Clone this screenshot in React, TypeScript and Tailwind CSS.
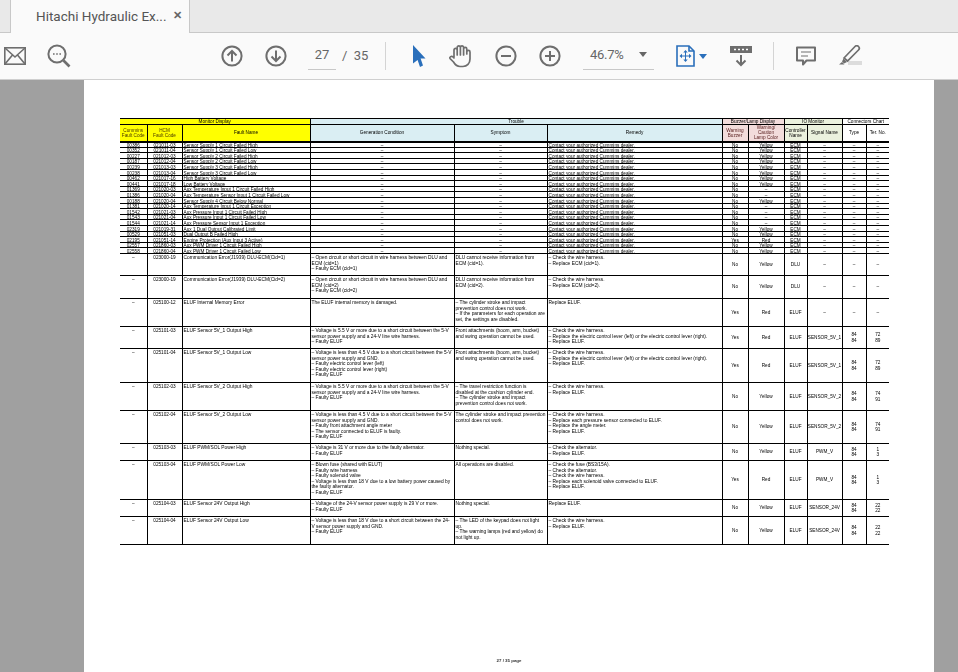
import { ReactNode } from 'react';

type Row = { hcm: string; name: string; cond?: ReactNode; sym?: ReactNode; rem?: ReactNode; buz: string; lamp: string; ctl: string; sig?: string; type?: boolean; ter?: string[]; h: string };

const short: [string, string, string, string, string][] = [
  ['00386', '021011-03', 'Sensor Supply 1 Circuit Failed High', 'No', 'Yellow'],
  ['00352', '021011-04', 'Sensor Supply 1 Circuit Failed Low', 'No', 'Yellow'],
  ['00227', '021012-03', 'Sensor Supply 2 Circuit Failed High', 'No', 'Yellow'],
  ['00187', '021012-04', 'Sensor Supply 2 Circuit Failed Low', 'No', 'Yellow'],
  ['00239', '021013-03', 'Sensor Supply 3 Circuit Failed High', 'No', 'Yellow'],
  ['00238', '021013-04', 'Sensor Supply 3 Circuit Failed Low', 'No', 'Yellow'],
  ['00462', '021017-16', 'High Battery Voltage', 'No', 'Yellow'],
  ['00441', '021017-18', 'Low Battery Voltage', 'No', 'Yellow'],
  ['01369', '021020-03', 'Aux Temperature Input 1 Circuit Failed High', 'No', '–'],
  ['01386', '021020-04', 'Aux Temperature Sensor Input 1 Circuit Failed Low', 'No', '–'],
  ['00188', '021020-04', 'Sensor Supply 4 Circuit Below Normal', 'No', 'Yellow'],
  ['01381', '021020-14', 'Aux Temperature Input 1 Circuit Exception', 'No', '–'],
  ['01542', '021021-03', 'Aux Pressure Input 1 Circuit Failed High', 'No', '–'],
  ['01543', '021021-04', 'Aux Pressure Input 1 Circuit Failed Low', 'No', '–'],
  ['01544', '021021-14', 'Aux Pressure Sensor Input 1 Exception', 'No', '–'],
  ['02319', '021019-31', 'Aux 1 Dual Output Calibrated Limit', 'No', 'Yellow'],
  ['00529', '021051-03', 'Dual Output B Failed High', 'No', 'Yellow'],
  ['02195', '021051-14', 'Engine Protection (Aux Input 3 Active)', 'Yes', 'Red'],
  ['02557', '021860-03', 'Aux PWM Driver 1 Circuit Failed High', 'No', 'Yellow'],
  ['02558', '021860-04', 'Aux PWM Driver 1 Circuit Failed Low', 'No', 'Yellow'],
];

const lines = (...t: string[]) => t.map((l, i) => <div key={i}>{l}</div>);

const rows: Row[] = [
  { hcm: '023000-19', name: 'Communication Error(J1939) DLU-ECM(Cid=1)', h: 'h-[22px]', buz: 'No', lamp: 'Yellow', ctl: 'DLU',
    cond: lines('– Open circuit or short circuit in wire harness between DLU and ECM (cid=1)', '– Faulty ECM (cid=1)'), sym: 'DLU cannot receive information from ECM (cid=1).', rem: lines('– Check the wire harness.', '– Replace ECM (cid=1).') },
  { hcm: '023000-19', name: 'Communication Error(J1939) DLU-ECM(Cid=2)', h: 'h-[23px]', buz: 'No', lamp: 'Yellow', ctl: 'DLU',
    cond: lines('– Open circuit or short circuit in wire harness between DLU and ECM (cid=2)', '– Faulty ECM (cid=2)'), sym: 'DLU cannot receive information from ECM (cid=2).', rem: lines('– Check the wire harness.', '– Replace ECM (cid=2).') },
  { hcm: '025100-12', name: 'ELUF Internal Memory Error', h: 'h-[28px]', buz: 'Yes', lamp: 'Red', ctl: 'ELUF',
    cond: 'The ELUF internal memory is damaged.', sym: lines('– The cylinder stroke and impact prevention control does not work.', '– If the parameters for each operation are set, the settings are disabled.'), rem: 'Replace ELUF.' },
  { hcm: '025101-03', name: 'ELUF Sensor 5V_1 Output High', h: 'h-[22px]', buz: 'Yes', lamp: 'Red', ctl: 'ELUF', sig: 'SENSOR_5V_1', type: true, ter: ['72', '89'],
    cond: lines('– Voltage is 5.5 V or more due to a short circuit between the 5-V sensor power supply and a 24-V line wire harness.', '– Faulty ELUF'), sym: 'Front attachments (boom, arm, bucket) and swing operation cannot be used.', rem: lines('– Check the wire harness.', '– Replace the electric control lever (left) or the electric control lever (right).', '– Replace ELUF.') },
  { hcm: '025101-04', name: 'ELUF Sensor 5V_1 Output Low', h: 'h-[34px]', buz: 'Yes', lamp: 'Red', ctl: 'ELUF', sig: 'SENSOR_5V_1', type: true, ter: ['72', '89'],
    cond: lines('– Voltage is less than 4.5 V due to a short circuit between the 5-V sensor power supply and GND.', '– Faulty electric control lever (left)', '– Faulty electric control lever (right)', '– Faulty ELUF'), sym: 'Front attachments (boom, arm, bucket) and swing operation cannot be used.', rem: lines('– Check the wire harness.', '– Replace the electric control lever (left) or the electric control lever (right).', '– Replace ELUF.') },
  { hcm: '025102-03', name: 'ELUF Sensor 5V_2 Output High', h: 'h-[28px]', buz: 'No', lamp: 'Yellow', ctl: 'ELUF', sig: 'SENSOR_5V_2', type: true, ter: ['74', '91'],
    cond: lines('– Voltage is 5.5 V or more due to a short circuit between the 5-V sensor power supply and a 24-V line wire harness.', '– Faulty ELUF'), sym: lines('– The travel restriction function is disabled at the cushion cylinder end.', '– The cylinder stroke and impact prevention control does not work.'), rem: lines('– Check the wire harness.', '– Replace ELUF.') },
  { hcm: '025102-04', name: 'ELUF Sensor 5V_2 Output Low', h: 'h-[33px]', buz: 'No', lamp: 'Yellow', ctl: 'ELUF', sig: 'SENSOR_5V_2', type: true, ter: ['74', '91'],
    cond: lines('– Voltage is less than 4.5 V due to a short circuit between the 5-V sensor power supply and GND.', '– Faulty front attachment angle meter', '– The sensor connected to ELUF is faulty.', '– Faulty ELUF'), sym: 'The cylinder stroke and impact prevention control does not work.', rem: lines('– Check the wire harness.', '– Replace each pressure sensor connected to ELUF.', '– Replace the angle meter.', '– Replace ELUF.') },
  { hcm: '025103-03', name: 'ELUF PWM/SOL Power High', h: 'h-[17px]', buz: 'No', lamp: 'Yellow', ctl: 'ELUF', sig: 'PWM_V', type: true, ter: ['1', '3'],
    cond: lines('– Voltage is 31 V or more due to the faulty alternator.', '– Faulty ELUF'), sym: 'Nothing special.', rem: lines('– Check the alternator.', '– Replace ELUF.') },
  { hcm: '025103-04', name: 'ELUF PWM/SOL Power Low', h: 'h-[39px]', buz: 'Yes', lamp: 'Red', ctl: 'ELUF', sig: 'PWM_V', type: true, ter: ['1', '3'],
    cond: lines('– Blown fuse (shared with ELUT)', '– Faulty wire harness', '– Faulty solenoid valve', '– Voltage is less than 18 V due to a low battery power caused by the faulty alternator.', '– Faulty ELUF'), sym: 'All operations are disabled.', rem: lines('– Check the fuse (BS3/15A).', '– Check the alternator.', '– Check the wire harness.', '– Replace each solenoid valve connected to ELUF.', '– Replace ELUF.') },
  { hcm: '025104-03', name: 'ELUF Sensor 24V Output High', h: 'h-[17px]', buz: 'No', lamp: 'Yellow', ctl: 'ELUF', sig: 'SENSOR_24V', type: true, ter: ['22', '22'],
    cond: lines('– Voltage of the 24-V sensor power supply is 29 V or more.', '– Faulty ELUF'), sym: 'Nothing special.', rem: 'Replace ELUF.' },
  { hcm: '025104-04', name: 'ELUF Sensor 24V Output Low', h: 'h-[28px]', buz: 'No', lamp: 'Yellow', ctl: 'ELUF', sig: 'SENSOR_24V', type: true, ter: ['22', '22'],
    cond: lines('– Voltage is less than 18 V due to a short circuit between the 24-V sensor power supply and GND.', '– Faulty ELUF'), sym: lines('– The LED of the keypad does not light up.', '– The warning lamps (red and yellow) do not light up.'), rem: lines('– Check the wire harness.', '– Replace ELUF.') },
];

const th = 'border border-black font-normal text-center align-middle p-0';
const td = 'border border-black text-center align-middle p-0';
const tdTop = 'border border-black align-top text-left px-px pt-px text-[4.85px]';
const tdName = 'border border-black text-left pl-px align-middle p-0 whitespace-nowrap overflow-hidden';

function PdfTable() {
  return (
    <table className="table-fixed border-collapse w-[769px] text-[4.7px] leading-[5.5px] text-black blur-[0.2px] [&_tr>*:first-child]:border-l-0 [&_tr>*:last-child]:border-r-0">
      <colgroup>
        <col className="w-[27px]" />
        <col className="w-[35px]" />
        <col className="w-[128px]" />
        <col className="w-[144px]" />
        <col className="w-[93px]" />
        <col className="w-[175px]" />
        <col className="w-[26px]" />
        <col className="w-[36px]" />
        <col className="w-[23px]" />
        <col className="w-[35px]" />
        <col className="w-[24px]" />
        <col className="w-[23px]" />
      </colgroup>
      <thead className="leading-[5px]">
        <tr className="h-[6px]">
          <th colSpan={3} className={`${th} bg-[#ffff00]`}>Monitor Display</th>
          <th colSpan={3} className={`${th} bg-[#daeef3]`}>Trouble</th>
          <th colSpan={2} className={`${th} bg-[#f2dcdb]`}>Buzzer/Lamp Display</th>
          <th colSpan={2} className={`${th} bg-[#ebf1de]`}>IO Monitor</th>
          <th colSpan={2} className={th}>Connectors Chart</th>
        </tr>
        <tr className="h-[17px] border-b-2 border-black">
          <th className={`${th} bg-[#ffff00] text-[#4a3a00]`}>Cummins<br />Fault Code</th>
          <th className={`${th} bg-[#ffff00] text-[#4a3a00]`}>HCM<br />Fault Code</th>
          <th className={`${th} bg-[#ffff00]`}>Fault Name</th>
          <th className={`${th} bg-[#daeef3]`}>Generation Condition</th>
          <th className={`${th} bg-[#daeef3]`}>Symptom</th>
          <th className={`${th} bg-[#daeef3]`}>Remedy</th>
          <th className={`${th} bg-[#f2dcdb] text-[#5a2020]`}>Warning<br />Buzzer</th>
          <th className={`${th} bg-[#f2dcdb] text-[#5a2020]`}>Warning/<br />Caution<br />Lamp Color</th>
          <th className={`${th} bg-[#ebf1de]`}>Controller<br />Name</th>
          <th className={`${th} bg-[#ebf1de]`}>Signal Name</th>
          <th className={th}>Type</th>
          <th className={th}>Ter. No.</th>
        </tr>
      </thead>
      <tbody>
        {short.map((r, i) => (
          <tr key={r[0]} className={`leading-[3px] [&>td]:pt-px ${i % 5 === 1 || i % 5 === 3 ? 'h-[5px]' : 'h-[6px]'}`}>
            <td className={td}>{r[0]}</td>
            <td className={td}>{r[1]}</td>
            <td className={tdName}>{r[2]}</td>
            <td className={td}>–</td>
            <td className={td}>–</td>
            <td className={tdName}>Contact your authorized Cummins dealer.</td>
            <td className={td}>{r[3]}</td>
            <td className={td}>{r[4]}</td>
            <td className={td}>ECM</td>
            <td className={td}>–</td>
            <td className={td}>–</td>
            <td className={td}>–</td>
          </tr>
        ))}
        {rows.map((r) => (
          <tr key={r.name} className={r.h}>
            <td className={`${td} !align-top pt-px`}>–</td>
            <td className={`${td} !align-top pt-px`}>{r.hcm}</td>
            <td className={tdTop}>{r.name}</td>
            <td className={tdTop}>{r.cond}</td>
            <td className={tdTop}>{r.sym}</td>
            <td className={tdTop}>{r.rem}</td>
            <td className={td}>{r.buz}</td>
            <td className={td}>{r.lamp}</td>
            <td className={td}>{r.ctl}</td>
            <td className={td}>{r.sig ?? '–'}</td>
            <td className={td}>{r.type ? <>84<br />84</> : '–'}</td>
            <td className={td}>{r.ter ? <>{r.ter[0]}<br />{r.ter[1]}</> : '–'}</td>
          </tr>
        ))}
      </tbody>
    </table>
  );
}

const GRAY = '#6e6e6e';
const BLUE = '#2a6fbb';

const CircleIcon = ({ children }: { children: ReactNode }) => (
  <svg width="22" height="22" viewBox="0 0 22 22" fill="none" stroke={GRAY} strokeWidth="2">
    <circle cx="11" cy="11" r="9.6" />
    {children}
  </svg>
);

const Sep = () => <div className="w-px h-[28px] bg-[#d4d4d4]" />;

function Toolbar() {
  return (
    <div className="h-[47px] bg-[#fafafa] border-b border-[#cfcfcf] flex items-center text-[#666] text-[13px] font-['Roboto',sans-serif]">
      <svg className="ml-1" width="22" height="18" viewBox="0 0 22 18" fill="none" stroke={GRAY} strokeWidth="1.6">
        <rect x="0.8" y="0.8" width="20.4" height="16.4" />
        <path d="M1 1l10 9 10-9M1 17l7.5-9M21 17l-7.5-9" />
      </svg>
      <svg className="ml-[21px]" width="24" height="24" viewBox="0 0 24 24" fill="none" stroke={GRAY}>
        <circle cx="10" cy="10" r="8.6" strokeWidth="2" />
        <path d="M16.5 16.5l6 6" strokeWidth="2.6" />
        <path d="M6 10h1.6M9.2 10h1.6M12.4 10h1.6" strokeWidth="1.6" />
      </svg>
      <div className="ml-[150px]">
        <CircleIcon><path d="M11 16.5V6M6.5 10.5L11 6l4.5 4.5" /></CircleIcon>
      </div>
      <div className="ml-[22px]">
        <CircleIcon><path d="M11 5.5V16M6.5 11.5L11 16l4.5-4.5" /></CircleIcon>
      </div>
      <div className="ml-[21px] w-[28px] h-[27px] border-b border-[#c8c8c8] text-center leading-[24px] mt-[1px]">27</div>
      <div className="ml-[6px] w-[23px] whitespace-pre">/  35</div>
      <div className="ml-[20px]"><Sep /></div>
      <svg className="ml-[26px]" width="14" height="22" viewBox="0 0 14 22" fill={BLUE}>
        <path d="M1 0l12.5 13.5H8.6L11 20.5l-3 1.5-2.4-7L1 18.5z" />
      </svg>
      <svg className="ml-[22px]" width="24" height="24" viewBox="0 0 24 24" fill="none" stroke={GRAY} strokeWidth="1.7" strokeLinecap="round">
        <path d="M6 13V6a1.6 1.6 0 0 1 3.2 0v5M9.2 11V3.5a1.6 1.6 0 0 1 3.2 0V11M12.4 11V3.5a1.6 1.6 0 0 1 3.2 0V11M15.6 11V5a1.6 1.6 0 0 1 3.2 0v5M18.8 8a1.6 1.6 0 0 1 3.2 0v7c0 4.5-3 7.5-7 7.5h-3c-3 0-5-2-6.5-4.5L2 14.5c-.8-1.5 1.5-3 3-1.5L6 14" />
      </svg>
      <div className="ml-[23px]">
        <CircleIcon><path d="M6 11h10" /></CircleIcon>
      </div>
      <div className="ml-[22px]">
        <CircleIcon><path d="M6 11h10M11 6v10" /></CircleIcon>
      </div>
      <div className="ml-[22px] w-[71px] h-[27px] border-b border-[#c8c8c8] flex items-center justify-between pl-[7px] pr-[7px] mt-[1px]">
        <span className="mt-[-3px] text-[#666] tracking-[-0.3px]">46.7%</span>
        <span className="mt-[-3px] w-0 h-0 border-x-[4px] border-x-transparent border-t-[5px] border-t-[#666]" />
      </div>
      <svg className="ml-[22px]" width="19" height="22" viewBox="0 0 19 22" fill="none" stroke={BLUE} strokeWidth="1.6">
        <path d="M1 1h12l5 5v15H1z" />
        <path d="M13 1v5h5" />
        <path d="M9.5 6.5v9M5 11h9" strokeWidth="1" />
        <path d="M9.5 5l-2.2 2.5h4.4zM9.5 17l-2.2-2.5h4.4zM3.5 11l2.5-2.2v4.4zM15.5 11l-2.5-2.2v4.4z" fill={BLUE} stroke="none" />
      </svg>
      <span className="ml-[4px] w-0 h-0 border-x-[4px] border-x-transparent border-t-[5px] border-t-[#2a6fbb]" />
      <svg className="ml-[23px]" width="22" height="22" viewBox="0 0 22 22" fill="none">
        <rect x="0" y="1" width="22" height="7" fill={GRAY} />
        <path d="M4 4.5h2M8 4.5h2M12 4.5h2M16 4.5h2" stroke="#fff" strokeWidth="1.5" />
        <path d="M11 10v10M6.5 15.5L11 20l4.5-4.5" stroke={GRAY} strokeWidth="2" />
      </svg>
      <div className="ml-[21px]"><Sep /></div>
      <svg className="ml-[22px]" width="20" height="21" viewBox="0 0 20 21" fill="none" stroke={GRAY} strokeWidth="2">
        <path d="M1 1.5h18v13H10.5L7 18.5v-4H1z" strokeLinejoin="round" />
        <path d="M5 6h10M5 10h7" strokeWidth="1.2" />
      </svg>
      <svg className="ml-[23px]" width="23" height="22" viewBox="0 0 23 22" fill="none">
        <path d="M9 20h14v-4H9z" fill="#dcdcdc" />
        <path d="M5 13L16 1.5c1-1 2.5-1 3.5 0s1 2.5 0 3.5L8.5 16z" stroke={GRAY} strokeWidth="1.7" />
        <path d="M4.5 13.500L8 17l-3 1.5-2-2zM3 17l2.5 2.500H0z" fill={GRAY} />
      </svg>
    </div>
  );
}

export default function App() {
  return (
    <div className="w-[958px] h-[672px] overflow-hidden bg-[#a0a0a0] flex flex-col font-['Liberation_Sans',Arial,sans-serif]">
      <div className="h-[33px] bg-[#e9e9e9] border-b border-[#c8c8c8] pl-[10px] flex shrink-0">
        <div className="w-[180px] h-[33px] bg-[#fafafa] border-x border-[#c8c8c8] flex items-center pl-[25px] text-[13.5px] text-[#555] font-['Roboto',sans-serif] whitespace-nowrap">
          <span>Hitachi Hydraulic Ex...</span>
          <span className="ml-[7px] text-[#666] font-bold text-[11px]">✕</span>
        </div>
      </div>
      <Toolbar />
      <div className="flex-1 ml-[84px] mr-[24px] bg-white relative pl-[36px] pt-[38px] flex flex-col">
        <PdfTable />
        <div className="absolute bottom-[7px] left-0 right-0 text-center text-[4.4px] font-bold text-[#333] blur-[0.2px]">27 / 35 page</div>
      </div>
    </div>
  );
}
